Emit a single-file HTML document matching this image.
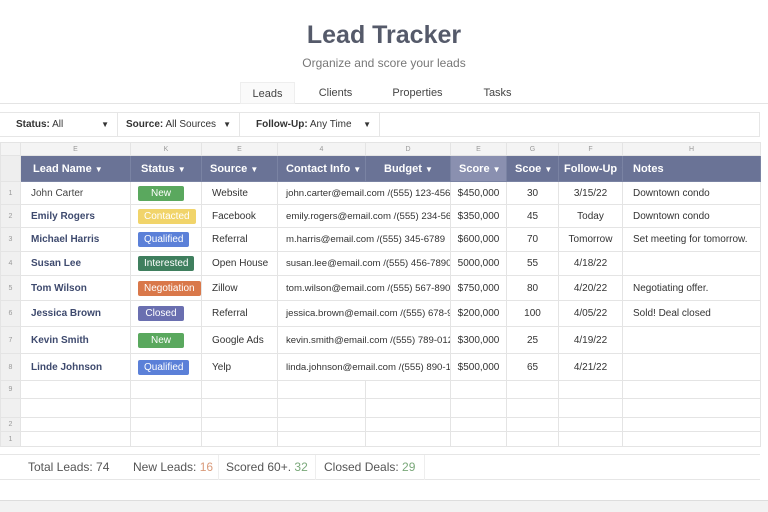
<!DOCTYPE html>
<html><head><meta charset="utf-8"><style>
*{box-sizing:border-box;margin:0;padding:0}
body{width:768px;height:512px;background:#fff;font-family:"Liberation Sans",sans-serif;position:relative;overflow:hidden;color:#333}
.abs{position:absolute}
h1{position:absolute;left:0;width:768px;top:21px;text-align:center;font-size:25px;color:#555a6a;font-weight:bold}
.sub{top:56px;left:0;width:768px;text-align:center;font-size:12px;color:#777}
.tabs{top:82px;left:0;width:768px;height:22px;border-bottom:1px solid #e4e4e4}
.tab{position:absolute;top:0;height:22px;line-height:22px;font-size:11px;color:#444;text-align:center}
.filters{top:112px;left:0;width:760px;height:25px;border:1px solid #e6e6e6;border-left:none;background:#fff}
.f{position:absolute;top:0;height:23px;line-height:23px;font-size:10px;color:#333;border-right:1px solid #e6e6e6}
.f i{position:absolute;right:8px;font-style:normal;font-size:8px}
table{position:absolute;left:0;top:142px;border-collapse:collapse;table-layout:fixed;width:760px;font-size:10px}
td{border:1px solid #e4e4e4;white-space:nowrap;overflow:hidden;padding:0 0 0 10px}
tr.let td{height:13px;background:#f4f4f4;color:#999;font-size:7px;text-align:center;padding:0}
tr.hd td{height:26px;background:#6a7396;color:#fff;font-weight:bold;font-size:11px;border-color:#7a83a3}
tr.hd td small{font-size:8px}
tr.hd td.rn{background:#eee;border-color:#e4e4e4}
td.rn{background:#f0f0f0;color:#999;font-size:7px;padding:0;text-align:center}
.c{text-align:center;padding:0}
.bd{display:inline-block;color:#fff;font-size:10px;height:15px;line-height:15px;padding:0 6px;border-radius:2px;min-width:46px;text-align:center}
.name{color:#3e4a6e;font-weight:bold}
.ct{font-size:9.6px}
</style></head><body>
<h1>Lead Tracker</h1>
<div class="abs sub">Organize and score your leads</div>
<div class="abs tabs">
<div class="tab" style="left:240px;width:55px;background:#fafafa;border:1px solid #eee">Leads</div>
<div class="tab" style="left:308px;width:55px">Clients</div>
<div class="tab" style="left:385px;width:65px">Properties</div>
<div class="tab" style="left:470px;width:55px">Tasks</div>
</div>
<div class="abs filters">
<div class="f" style="left:0;width:118px;padding-left:16px"><b>Status:</b> All<i>▼</i></div>
<div class="f" style="left:120px;width:120px;padding-left:6px"><b>Source:</b> All Sources<i>▼</i></div>
<div class="f" style="left:246px;width:134px;padding-left:10px"><b>Follow-Up:</b> Any Time<i>▼</i></div>
</div>
<table>
<colgroup><col style="width:20px"><col style="width:110px"><col style="width:71px"><col style="width:76px"><col style="width:88px"><col style="width:85px"><col style="width:56px"><col style="width:52px"><col style="width:64px"><col style="width:138px"></colgroup>
<tr class="let"><td></td><td>E</td><td>K</td><td>E</td><td>4</td><td>D</td><td>E</td><td>G</td><td>F</td><td>H</td></tr>
<tr class="hd"><td class="rn"></td><td style="padding-left:12px">Lead Name <small>▼</small></td><td>Status <small>▼</small></td><td style="padding-left:8px">Source <small>▼</small></td><td style="padding-left:8px">Contact Info <small>▼</small></td><td style="padding-left:18px">Budget <small>▼</small></td><td style="background:#8a90b0;padding-left:8px">Score <small>▼</small></td><td style="padding-left:8px">Scoe <small>▼</small></td><td style="padding-left:5px">Follow-Up <small>▼</small></td><td>Notes</td></tr>
<tr style="height:23px"><td class="rn">1</td><td style="color:#444">John Carter</td><td style="padding-left:7px"><span class="bd" style="background:#5aa85e">New</span></td><td>Website</td><td colspan="2" class="ct" style="padding-left:8px">john.carter@email.com /(555) 123-4567</td><td class="c">$450,000</td><td class="c">30</td><td class="c">3/15/22</td><td>Downtown condo</td></tr>
<tr style="height:23px"><td class="rn">2</td><td class="name">Emily Rogers</td><td style="padding-left:7px"><span class="bd" style="background:#f1d46a">Contacted</span></td><td>Facebook</td><td colspan="2" class="ct" style="padding-left:8px">emily.rogers@email.com /(555) 234-5678</td><td class="c">$350,000</td><td class="c">45</td><td class="c">Today</td><td>Downtown condo</td></tr>
<tr style="height:24px"><td class="rn">3</td><td class="name">Michael Harris</td><td style="padding-left:7px"><span class="bd" style="background:#5b80d8">Qualified</span></td><td>Referral</td><td colspan="2" class="ct" style="padding-left:8px">m.harris@email.com /(555) 345-6789</td><td class="c">$600,000</td><td class="c">70</td><td class="c">Tomorrow</td><td>Set meeting for tomorrow.</td></tr>
<tr style="height:24px"><td class="rn">4</td><td class="name">Susan Lee</td><td style="padding-left:7px"><span class="bd" style="background:#3f7f5e">Interested</span></td><td>Open House</td><td colspan="2" class="ct" style="padding-left:8px">susan.lee@email.com /(555) 456-7890</td><td class="c">5000,000</td><td class="c">55</td><td class="c">4/18/22</td><td></td></tr>
<tr style="height:25px"><td class="rn">5</td><td class="name">Tom Wilson</td><td style="padding-left:7px"><span class="bd" style="background:#d9784a">Negotiation</span></td><td>Zillow</td><td colspan="2" class="ct" style="padding-left:8px">tom.wilson@email.com /(555) 567-8901</td><td class="c">$750,000</td><td class="c">80</td><td class="c">4/20/22</td><td>Negotiating offer.</td></tr>
<tr style="height:26px"><td class="rn">6</td><td class="name">Jessica Brown</td><td style="padding-left:7px"><span class="bd" style="background:#6a6fb0">Closed</span></td><td>Referral</td><td colspan="2" class="ct" style="padding-left:8px">jessica.brown@email.com /(555) 678-9012</td><td class="c">$200,000</td><td class="c">100</td><td class="c">4/05/22</td><td>Sold! Deal closed</td></tr>
<tr style="height:27px"><td class="rn">7</td><td class="name">Kevin Smith</td><td style="padding-left:7px"><span class="bd" style="background:#5aa85e">New</span></td><td>Google Ads</td><td colspan="2" class="ct" style="padding-left:8px">kevin.smith@email.com /(555) 789-0123</td><td class="c">$300,000</td><td class="c">25</td><td class="c">4/19/22</td><td></td></tr>
<tr style="height:27px"><td class="rn">8</td><td class="name">Linde Johnson</td><td style="padding-left:7px"><span class="bd" style="background:#5b80d8">Qualified</span></td><td>Yelp</td><td colspan="2" class="ct" style="padding-left:8px">linda.johnson@email.com /(555) 890-1834</td><td class="c">$500,000</td><td class="c">65</td><td class="c">4/21/22</td><td></td></tr>
<tr style="height:18px"><td class="rn">9</td><td></td><td></td><td></td><td></td><td></td><td></td><td></td><td></td><td></td></tr>
<tr style="height:19px"><td class="rn"></td><td></td><td></td><td></td><td></td><td></td><td></td><td></td><td></td><td></td></tr>
<tr style="height:14px"><td class="rn">2</td><td></td><td></td><td></td><td></td><td></td><td></td><td></td><td></td><td></td></tr>
<tr style="height:15px"><td class="rn">1</td><td></td><td></td><td></td><td></td><td></td><td></td><td></td><td></td><td></td></tr>
</table>
<div class="abs" style="left:0;top:454px;width:760px;height:26px;border-top:1px solid #e6e6e6;border-bottom:1px solid #e6e6e6;font-size:12px;color:#555;line-height:25px">
<span class="abs" style="left:28px">Total Leads: 74</span>
<span class="abs" style="left:133px">New Leads: <span style="color:#d99a7a">16</span></span>
<span class="abs" style="left:218px;border-left:1px solid #eee;padding-left:7px;width:96px">Scored 60+. <span style="color:#7aa87a">32</span></span>
<span class="abs" style="left:315px;border-left:1px solid #eee;padding-left:8px;width:110px;border-right:1px solid #eee">Closed Deals: <span style="color:#7aa87a">29</span></span>
</div>
<div class="abs" style="left:0;top:500px;width:768px;height:12px;background:#f2f2f2;border-top:1px solid #ddd"></div>
</body></html>
